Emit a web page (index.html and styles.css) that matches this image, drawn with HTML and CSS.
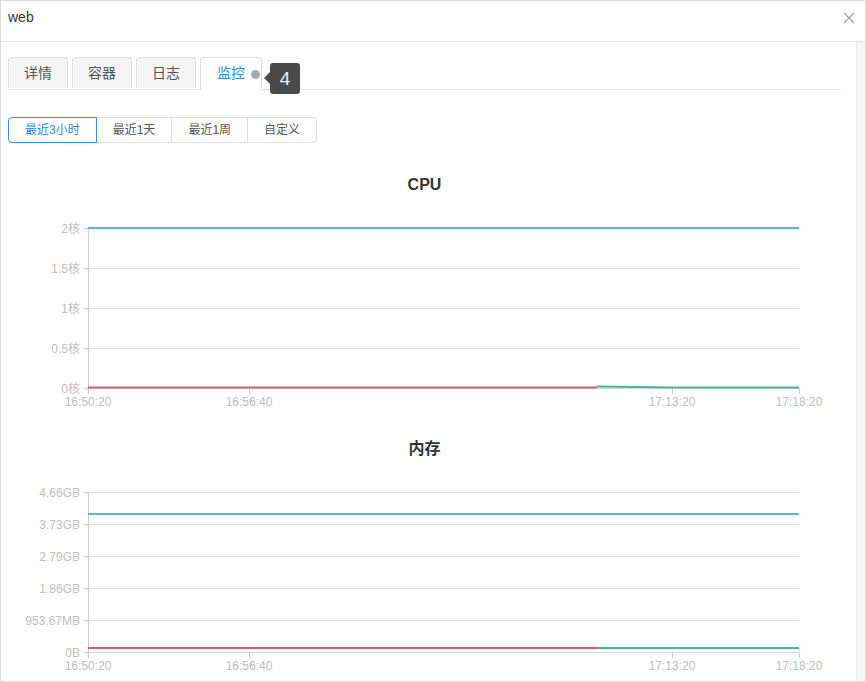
FILE: index.html
```html
<!DOCTYPE html>
<html lang="zh">
<head>
<meta charset="utf-8">
<title>web</title>
<link rel="stylesheet" href="styles.css">
</head>
<body>
<div class="modal">
  <div class="header">
    <span class="title">web</span>
    <svg class="close" width="12" height="12" viewBox="0 0 12 12"><path d="M1 1L11 11M11 1L1 11" stroke="#a0a0a0" stroke-width="1.2" fill="none"/></svg>
  </div>
  <div class="body">
    <div class="content">
      <div class="tabs">
        <div class="tab">详情</div>
        <div class="tab">容器</div>
        <div class="tab">日志</div>
        <div class="tab active">监控</div>
        <span class="dot"></span>
        <div class="tip">4</div>
      </div>
      <div class="btn-group">
        <div class="btn active">最近3小时</div>
        <div class="btn">最近1天</div>
        <div class="btn">最近1周</div>
        <div class="btn">自定义</div>
      </div>
      <div class="chart chart-cpu">
        <div class="chart-title">CPU</div>
        <svg class="plot" width="833" height="225" viewBox="0 0 833 225">
          <g class="grid">
            <line x1="80" y1="33.5" x2="791" y2="33.5"/>
            <line x1="80" y1="73.5" x2="791" y2="73.5"/>
            <line x1="80" y1="113.5" x2="791" y2="113.5"/>
            <line x1="80" y1="153.5" x2="791" y2="153.5"/>
            <line x1="80" y1="193.5" x2="791" y2="193.5"/>
          </g>
          <g class="axis">
            <line x1="80.5" y1="33" x2="80.5" y2="199"/>
            <line x1="76" y1="33.5" x2="80" y2="33.5"/>
            <line x1="76" y1="73.5" x2="80" y2="73.5"/>
            <line x1="76" y1="113.5" x2="80" y2="113.5"/>
            <line x1="76" y1="153.5" x2="80" y2="153.5"/>
            <line x1="76" y1="193.5" x2="80" y2="193.5"/>
            <line x1="241.5" y1="193" x2="241.5" y2="199"/>
            <line x1="664.5" y1="193" x2="664.5" y2="199"/>
            <line x1="791.5" y1="193" x2="791.5" y2="199"/>
          </g>
          <g class="ylabels">
            <text x="72" y="37.5">2核</text>
            <text x="72" y="77.5">1.5核</text>
            <text x="72" y="117.5">1核</text>
            <text x="72" y="157.5">0.5核</text>
            <text x="72" y="197.5">0核</text>
          </g>
          <g class="xlabels">
            <text x="80" y="211">16:50:20</text>
            <text x="241" y="211">16:56:40</text>
            <text x="664" y="211">17:13:20</text>
            <text x="791" y="211">17:18:20</text>
          </g>
          <line class="s-cyan" x1="80" y1="33" x2="791" y2="33"/>
          <line class="s-red" x1="80" y1="192.5" x2="589" y2="192.5"/>
          <polyline class="s-green" points="589,191.5 664,192.5 791,192.5"/>
        </svg>
      </div>
      <div class="chart chart-mem">
        <div class="chart-title">内存</div>
        <svg class="plot" width="833" height="225" viewBox="0 0 833 225">
          <g class="grid">
            <line x1="80" y1="33.5" x2="791" y2="33.5"/>
            <line x1="80" y1="65.5" x2="791" y2="65.5"/>
            <line x1="80" y1="97.5" x2="791" y2="97.5"/>
            <line x1="80" y1="129.5" x2="791" y2="129.5"/>
            <line x1="80" y1="161.5" x2="791" y2="161.5"/>
            <line x1="80" y1="193.5" x2="791" y2="193.5"/>
          </g>
          <g class="axis">
            <line x1="80.5" y1="33" x2="80.5" y2="199"/>
            <line x1="76" y1="33.5" x2="80" y2="33.5"/>
            <line x1="76" y1="65.5" x2="80" y2="65.5"/>
            <line x1="76" y1="97.5" x2="80" y2="97.5"/>
            <line x1="76" y1="129.5" x2="80" y2="129.5"/>
            <line x1="76" y1="161.5" x2="80" y2="161.5"/>
            <line x1="76" y1="193.5" x2="80" y2="193.5"/>
            <line x1="241.5" y1="193" x2="241.5" y2="199"/>
            <line x1="664.5" y1="193" x2="664.5" y2="199"/>
            <line x1="791.5" y1="193" x2="791.5" y2="199"/>
          </g>
          <g class="ylabels">
            <text x="72" y="37.5">4.66GB</text>
            <text x="72" y="69.5">3.73GB</text>
            <text x="72" y="101.5">2.79GB</text>
            <text x="72" y="133.5">1.86GB</text>
            <text x="72" y="165.5">953.67MB</text>
            <text x="72" y="197.5">0B</text>
          </g>
          <g class="xlabels">
            <text x="80" y="211">16:50:20</text>
            <text x="241" y="211">16:56:40</text>
            <text x="664" y="211">17:13:20</text>
            <text x="791" y="211">17:18:20</text>
          </g>
          <line class="s-cyan" x1="80" y1="55" x2="791" y2="55"/>
          <line class="s-red" x1="80" y1="189" x2="589" y2="189"/>
          <line class="s-green" x1="589" y1="189" x2="791" y2="189"/>
        </svg>
      </div>
    </div>
    <div class="scrollbar"></div>
  </div>
</div>
</body>
</html>
```

FILE: styles.css
```css
html, body {
  margin: 0;
  padding: 0;
  background: #fff;
}
body {
  font-family: "Liberation Sans", "Noto Sans CJK SC", Arial, sans-serif;
  color: #333;
}
.modal {
  width: 866px;
  height: 682px;
  box-sizing: border-box;
  border: 1px solid #d9d9d9;
  overflow: hidden;
  display: flex;
  flex-direction: column;
}
.header {
  height: 40px;
  flex: none;
  border-bottom: 1px solid #e5e5e5;
  display: flex;
  align-items: center;
  justify-content: space-between;
  padding: 0 10px 0 7px;
}
.title {
  font-size: 14px;
  color: #333;
  margin-top: -8px;
}
.close {
  margin-top: -7px;
}
.body {
  flex: 1;
  display: flex;
  min-height: 0;
}
.content {
  flex: 1;
  padding: 15px 15px 0 7px;
  min-width: 0;
}
.scrollbar {
  width: 8px;
  flex: none;
  background: #f6f6f6;
  border-left: 1px solid #e8e8e8;
}
.tabs {
  position: relative;
  display: flex;
  gap: 4px;
  height: 32px;
  border-bottom: 1px solid #dddddd;
}
.tab {
  height: 31px;
  box-sizing: border-box;
  padding: 0 15px;
  font-size: 14px;
  line-height: 30px;
  color: #555;
  background: #f5f5f5;
  border: 1px solid #dcdcdc;
  border-bottom: none;
  border-radius: 4px 4px 0 0;
}
.tab.active {
  background: #fff;
  color: #2f89d9;
  height: 33px;
  padding: 0 16px;
}
.dot {
  position: absolute;
  left: 243px;
  top: 13px;
  width: 9px;
  height: 9px;
  border-radius: 50%;
  background: #a9a9a9;
}
.tip {
  position: absolute;
  left: 262px;
  top: 6px;
  width: 30px;
  height: 31px;
  background: #4a4a4a;
  border-radius: 3px;
  color: #f2f2f2;
  font-size: 19px;
  line-height: 31px;
  text-align: center;
}
.tip::before {
  content: "";
  position: absolute;
  left: -6px;
  top: 9px;
  border-top: 6px solid transparent;
  border-bottom: 6px solid transparent;
  border-right: 6px solid #4a4a4a;
}
.btn-group {
  display: flex;
  margin-top: 27px;
}
.btn {
  height: 26px;
  box-sizing: border-box;
  padding: 0 16px;
  font-size: 12px;
  line-height: 24px;
  color: #555;
  border: 1px solid #dcdcdc;
  margin-left: -1px;
}
.btn:first-child {
  margin-left: 0;
  border-radius: 4px 0 0 4px;
}
.btn:last-child {
  border-radius: 0 4px 4px 0;
}
.btn.active {
  color: #2f89d9;
  border-color: #3b8ee0;
  position: relative;
}
.chart-cpu {
  margin-top: 32px;
}
.chart-mem {
  margin-top: 19px;
}
.chart-title {
  height: 20px;
  line-height: 20px;
  text-align: center;
  font-size: 16px;
  font-weight: bold;
  color: #333;
}
.plot {
  display: block;
}
.grid line {
  stroke: #dadada;
  stroke-width: 1;
}
.axis line {
  stroke: #cccccc;
  stroke-width: 1;
}
.ylabels text {
  font-family: "Liberation Sans", "Noto Sans CJK SC", Arial, sans-serif;
  font-size: 12px;
  fill: #bdbdbd;
  text-anchor: end;
}
.xlabels text {
  font-family: "Liberation Sans", Arial, sans-serif;
  font-size: 12px;
  fill: #bdbdbd;
  text-anchor: middle;
}
.s-cyan {
  stroke: #56bccd;
  stroke-width: 2;
  fill: none;
}
.s-red {
  stroke: #d45e69;
  stroke-width: 2;
  fill: none;
}
.s-green {
  stroke: #45b598;
  stroke-width: 2;
  fill: none;
}
```
